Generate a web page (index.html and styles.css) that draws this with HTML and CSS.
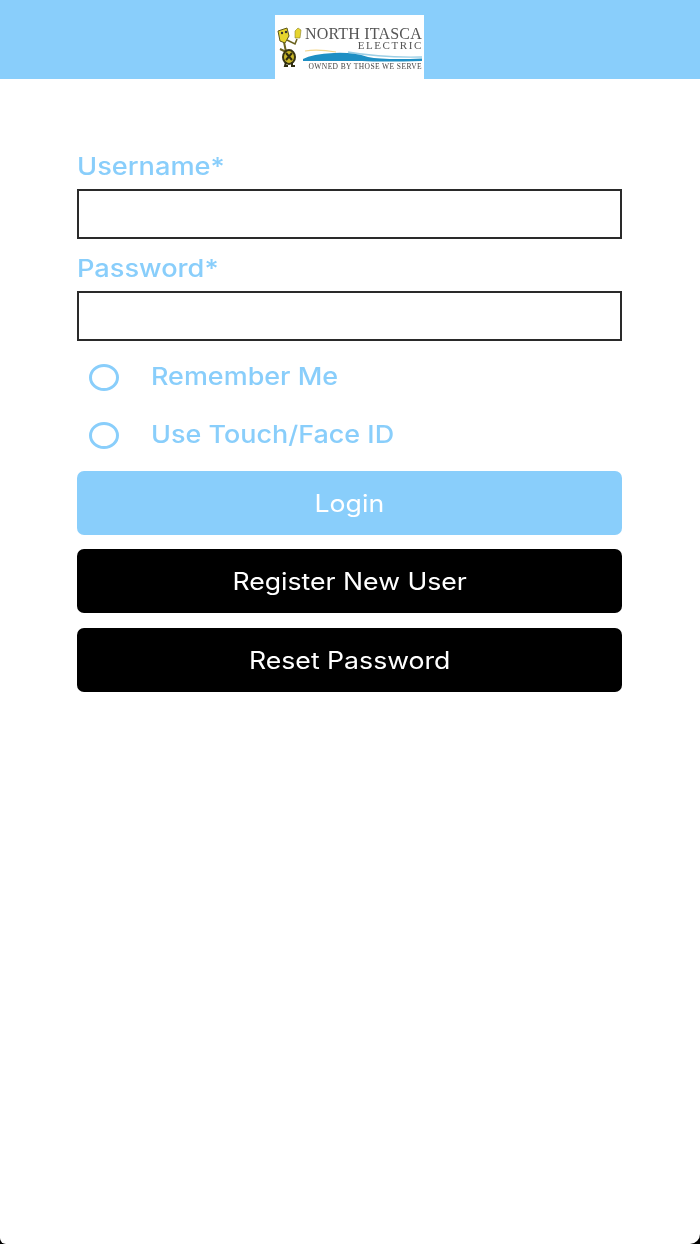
FILE: index.html
```html
<!DOCTYPE html>
<html lang="en">
<head>
    <meta charset="UTF-8">
    <title>North Itasca Electric Login</title>
    <link rel="stylesheet" href="styles.css">
</head>
<body>
    <div class="screen">
        <header class="top-bar">
            <div class="logo">
                <svg class="mascot" viewBox="0 0 25 41" width="25" height="41">
                    <path d="M7 15 L9 25 L3 22 M9 25 L12 27" fill="none" stroke="#6b6320" stroke-width="2"/>
                    <path d="M10 13 L18 17 L20 12" fill="none" stroke="#6b6320" stroke-width="1.6"/>
                    <path d="M1 4 L10 1 L12 9 L8 16 L3 14 Z" fill="#e6d52e" stroke="#5c5618" stroke-width="1"/>
                    <circle cx="5" cy="6" r="1.2" fill="#333"/>
                    <circle cx="9" cy="5" r="1.2" fill="#333"/>
                    <path d="M18 11 L18 4 L21 1 L24 3 L23 11 Z" fill="#e6d52e" stroke="#8a8228" stroke-width=".6"/>
                    <ellipse cx="12" cy="30" rx="6" ry="7" fill="#c9b628" stroke="#3a3612" stroke-width="2"/>
                    <path d="M9 35 L8 39 L11 39 M15 35 L15 39 L18 39 M9 26 L15 33 M15 26 L9 33" stroke="#2f2c10" stroke-width="2" fill="none"/>
                </svg>
                <div class="logo-right">
                    <div class="logo-name">NORTH ITASCA</div>
                    <div class="logo-sub">ELECTRIC</div>
                    <svg class="wave" viewBox="0 0 120 13" width="120" height="13">
                        <path d="M3 2 Q16 0 34 3" fill="none" stroke="#f2d58c" stroke-width="1.2"/>
                        <path d="M46 3 Q80 9 120 8" fill="none" stroke="#9ccfe6" stroke-width="1.4"/>
                        <path d="M1 10 Q10 5 32 4 Q50 3 66 8 Q82 11 120 9.5 L120 12 Q80 13 60 12 L1 12 Z" fill="#1e8fc4"/>
                    </svg>
                    <div class="logo-tag">OWNED BY THOSE WE SERVE</div>
                </div>
            </div>
        </header>

        <form class="login-form">
            <div class="fields">
                <div class="field">
                    <label class="field-label" for="username"><span class="wide">Username*</span></label>
                    <input class="text-input" id="username" type="text">
                </div>
                <div class="field">
                    <label class="field-label" for="password"><span class="wide">Password*</span></label>
                    <input class="text-input" id="password" type="password">
                </div>
            </div>

            <div class="options">
                <div class="option-row">
                    <span class="radio"></span>
                    <span class="option-text wide">Remember Me</span>
                </div>
                <div class="option-row">
                    <span class="radio"></span>
                    <span class="option-text wide">Use Touch/Face ID</span>
                </div>
            </div>

            <div class="buttons">
                <button class="btn btn-login" type="button"><span class="wide">Login</span></button>
                <button class="btn" type="button"><span class="wide">Register New User</span></button>
                <button class="btn" type="button"><span class="wide">Reset Password</span></button>
            </div>
        </form>
    </div>
</body>
</html>
```

FILE: styles.css
```css
html, body { margin: 0; padding: 0; height: 1244px; overflow: hidden; background: #000; }
body { font-family: Inter, "Liberation Sans", sans-serif; }
.screen { height: 1244px; background: #fff; border-radius: 0 0 10px 6px; overflow: hidden; }

/* the reference text is stretched sideways */
.wide { display: inline-block; transform: scaleX(1.11); }

.top-bar { height: 79px; background: #89cefb; display: flex; justify-content: center; align-items: flex-end; }
.logo { width: 149px; height: 64px; background: #fff; display: flex; align-items: flex-start; box-sizing: border-box; padding: 12px 2px 0 2px; margin-left: -1px; filter: blur(.5px); }
.mascot { flex: none; }
.logo-right { flex: 1; font-family: "Liberation Serif", serif; color: #555; display: flex; flex-direction: column; align-items: flex-end; }
.logo-name { font-size: 16px; line-height: 14px; white-space: nowrap; letter-spacing: .2px; }
.logo-sub { font-size: 11px; line-height: 9px; letter-spacing: 1.6px; margin-right: -1px; }
.wave { display: block; margin-top: -1px; }
.logo-tag { font-size: 7.5px; line-height: 9px; white-space: nowrap; color: #444; letter-spacing: .4px; }

.login-form { width: 545px; margin-left: 77px; padding-top: 71px; }
.fields { display: flex; flex-direction: column; gap: 13px; }
.field { display: flex; flex-direction: column; }
.field-label { height: 39px; font-size: 24.5px; line-height: 33px; font-weight: 500; color: #89cefb; }
.field-label .wide { transform-origin: left center; }
.text-input { box-sizing: border-box; height: 50px; border: 2px solid #2a2a2a; background: #fff; padding: 0 8px; outline: none; border-radius: 0; }

.options { margin-top: 7px; }
.option-row { display: flex; align-items: center; height: 58px; padding-left: 12px; }
.radio { box-sizing: border-box; width: 30px; height: 27px; border: 3px solid #89cefb; border-radius: 50%; flex: none; }
.option-text { margin: 0 0 2px 32px; font-size: 24.5px; font-weight: 500; color: #89cefb; transform-origin: left center; transform: scaleX(1.1); }

.buttons { margin-top: 6.75px; display: flex; flex-direction: column; gap: 14.5px; }
.btn { height: 64px; border: none; border-radius: 7px; background: #000; color: #fff; font-family: inherit; font-size: 24px; padding: 1px 0 0; }
.btn-login { background: #89cefb; }
```
